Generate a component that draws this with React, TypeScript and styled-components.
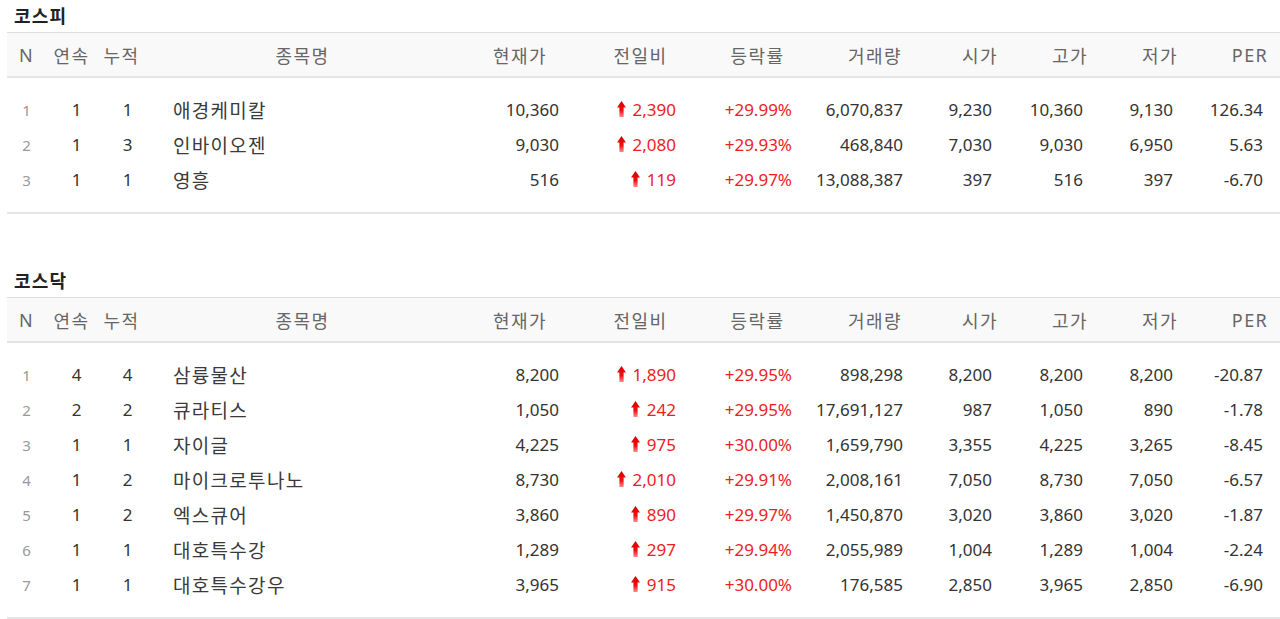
import React from "react";
import styled, { createGlobalStyle } from "styled-components";

const GlobalStyle = createGlobalStyle`
  html, body {
    margin: 0;
    padding: 0;
    background: #ffffff;
    overflow: hidden;
  }
  body {
    font-family: "Noto Sans", "Noto Sans CJK KR", sans-serif;
    color: #333333;
  }
`;

type Row = {
  streak: number;
  total: number;
  name: string;
  price: string;
  change: string;
  rate: string;
  volume: string;
  open: string;
  high: string;
  low: string;
  per: string;
};

const kospi: Row[] = [
  { streak: 1, total: 1, name: "애경케미칼", price: "10,360", change: "2,390", rate: "+29.99%", volume: "6,070,837", open: "9,230", high: "10,360", low: "9,130", per: "126.34" },
  { streak: 1, total: 3, name: "인바이오젠", price: "9,030", change: "2,080", rate: "+29.93%", volume: "468,840", open: "7,030", high: "9,030", low: "6,950", per: "5.63" },
  { streak: 1, total: 1, name: "영흥", price: "516", change: "119", rate: "+29.97%", volume: "13,088,387", open: "397", high: "516", low: "397", per: "-6.70" },
];

const kosdaq: Row[] = [
  { streak: 4, total: 4, name: "삼륭물산", price: "8,200", change: "1,890", rate: "+29.95%", volume: "898,298", open: "8,200", high: "8,200", low: "8,200", per: "-20.87" },
  { streak: 2, total: 2, name: "큐라티스", price: "1,050", change: "242", rate: "+29.95%", volume: "17,691,127", open: "987", high: "1,050", low: "890", per: "-1.78" },
  { streak: 1, total: 1, name: "자이글", price: "4,225", change: "975", rate: "+30.00%", volume: "1,659,790", open: "3,355", high: "4,225", low: "3,265", per: "-8.45" },
  { streak: 1, total: 2, name: "마이크로투나노", price: "8,730", change: "2,010", rate: "+29.91%", volume: "2,008,161", open: "7,050", high: "8,730", low: "7,050", per: "-6.57" },
  { streak: 1, total: 2, name: "엑스큐어", price: "3,860", change: "890", rate: "+29.97%", volume: "1,450,870", open: "3,020", high: "3,860", low: "3,020", per: "-1.87" },
  { streak: 1, total: 1, name: "대호특수강", price: "1,289", change: "297", rate: "+29.94%", volume: "2,055,989", open: "1,004", high: "1,289", low: "1,004", per: "-2.24" },
  { streak: 1, total: 1, name: "대호특수강우", price: "3,965", change: "915", rate: "+30.00%", volume: "176,585", open: "2,850", high: "3,965", low: "2,850", per: "-6.90" },
];

const columns = [
  { label: "N", width: 39 },
  { label: "연속", width: 51 },
  { label: "누적", width: 49 },
  { label: "종목명", width: 313 },
  { label: "현재가", width: 122 },
  { label: "전일비", width: 119 },
  { label: "등락률", width: 115 },
  { label: "거래량", width: 120 },
  { label: "시가", width: 90 },
  { label: "고가", width: 90 },
  { label: "저가", width: 90 },
  { label: "PER", width: 90 },
];

const Page = styled.div`
  width: 1280px;
  padding-left: 7px;
  box-sizing: border-box;
  overflow: hidden;
`;

const Section = styled.section<{ $gap: number }>`
  margin-top: ${(p) => p.$gap}px;
`;

const Title = styled.h3`
  margin: 0;
  height: 32px;
  line-height: 30px;
  padding-left: 7px;
  font-size: 18px;
  font-weight: 700;
  letter-spacing: 1.2px;
  color: #222222;
  font-family: "Noto Sans CJK KR", sans-serif;
`;

const Table = styled.table`
  width: 1288px;
  table-layout: fixed;
  border-collapse: collapse;
  border-spacing: 0;
`;

const Col = styled.col<{ $w: number }>`
  width: ${(p) => p.$w}px;
`;

const HeadRow = styled.tr`
  background: #f9f9f9;
  border-top: 1px solid #dddddd;
  border-bottom: 2px solid #e4e4e4;
`;

const Th = styled.th`
  height: 43px;
  padding: 0;
  text-align: center;
  font-weight: 400;
  font-size: 18px;
  letter-spacing: 1.4px;
  color: #666666;
  font-family: "Noto Sans", "Noto Sans CJK KR", sans-serif;
`;

const Spacer = styled.tr<{ $h: number }>`
  height: ${(p) => p.$h}px;
  & > td {
    padding: 0;
  }
`;

const BodyEnd = styled.tr`
  border-bottom: 2px solid #e6e6e6;
`;

const DataRow = styled.tr`
  height: 35px;
`;

const Td = styled.td<{ $align?: "left" | "right" | "center"; $pr?: number; $pl?: number; $red?: boolean }>`
  padding: 0 ${(p) => p.$pr ?? 0}px 0 ${(p) => p.$pl ?? 0}px;
  text-align: ${(p) => p.$align ?? "right"};
  font-size: 17px;
  color: ${(p) => (p.$red ? "#ec1c24" : "#333333")};
  white-space: nowrap;
  vertical-align: middle;
`;

const RankCell = styled(Td)`
  font-size: 15px;
  color: #999999;
`;

const NameCell = styled(Td)`
  font-size: 19px;
  letter-spacing: 1.3px;
  color: #3a3a3a;
  font-family: "Noto Sans CJK KR", sans-serif;
`;

const ArrowIcon = styled.svg`
  width: 9px;
  height: 16px;
  margin-right: 7px;
  vertical-align: -1px;
`;

const UpArrow: React.FC<{ id: string }> = ({ id }) => (
  <ArrowIcon viewBox="0 0 9 16">
    <defs>
      <linearGradient id={id} x1="0" y1="0" x2="0" y2="1">
        <stop offset="0" stopColor="#d40000" />
        <stop offset="0.6" stopColor="#f01010" />
        <stop offset="1" stopColor="#ff8a8a" />
      </linearGradient>
    </defs>
    <path d="M4.5 0 L9 6.5 L6.6 6.5 L6.6 16 L2.4 16 L2.4 6.5 L0 6.5 Z" fill={`url(#${id})`} />
  </ArrowIcon>
);

const StockTable: React.FC<{ title: string; rows: Row[]; gap: number; prefix: string }> = ({ title, rows, gap, prefix }) => (
  <Section $gap={gap}>
    <Title>{title}</Title>
    <Table>
      <colgroup>
        {columns.map((c) => (
          <Col key={c.label} $w={c.width} />
        ))}
      </colgroup>
      <thead>
        <HeadRow>
          {columns.map((c) => (
            <Th key={c.label}>{c.label}</Th>
          ))}
        </HeadRow>
      </thead>
      <tbody>
        <Spacer $h={15}>
          <td colSpan={12} />
        </Spacer>
        {rows.map((r, i) => (
          <DataRow key={r.name}>
            <RankCell $align="center">{i + 1}</RankCell>
            <Td $align="center" $pl={10}>{r.streak}</Td>
            <Td $align="center" $pl={12}>{r.total}</Td>
            <NameCell $align="left" $pl={27}>{r.name}</NameCell>
            <Td $pr={22}>{r.price}</Td>
            <Td $pr={24} $red>
              <UpArrow id={`${prefix}-arrow-${i}`} />
              {r.change}
            </Td>
            <Td $pr={23} $red>{r.rate}</Td>
            <Td $pr={32}>{r.volume}</Td>
            <Td $pr={33}>{r.open}</Td>
            <Td $pr={32}>{r.high}</Td>
            <Td $pr={32}>{r.low}</Td>
            <Td $pr={32}>{r.per}</Td>
          </DataRow>
        ))}
        <BodyEnd>
          <Spacer as="td" colSpan={12} $h={13} />
        </BodyEnd>
      </tbody>
    </Table>
  </Section>
);

export default function App() {
  return (
    <Page>
      <GlobalStyle />
      <StockTable title="코스피" rows={kospi} gap={0} prefix="kospi" />
      <StockTable title="코스닥" rows={kosdaq} gap={51} prefix="kosdaq" />
    </Page>
  );
}
